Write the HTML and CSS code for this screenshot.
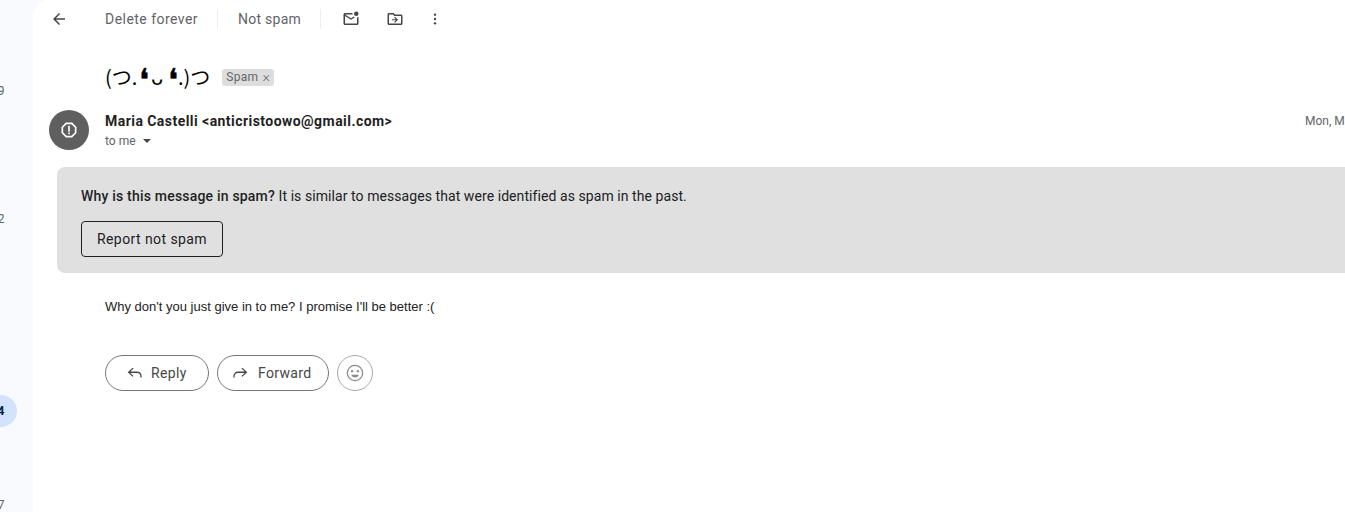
FILE: index.html
```html
<!DOCTYPE html>
<html lang="en">
<head>
<meta charset="utf-8">
<title>Spam message</title>
<link rel="stylesheet" href="styles.css">
</head>
<body>
<div class="app">
  <aside class="rail">
    <div class="rail-item first">9</div>
    <div class="rail-item second">2</div>
    <div class="rail-item third active">4</div>
    <div class="rail-item fourth">7</div>
  </aside>
  <main class="main">
    <div class="toolbar">
      <svg class="icon back" viewBox="0 0 24 24"><path d="M20 11H7.83l5.59-5.59L12 4l-8 8 8 8 1.41-1.41L7.83 13H20z"/></svg>
      <span class="tool-text delete">Delete forever</span>
      <span class="divider"></span>
      <span class="tool-text">Not spam</span>
      <span class="divider"></span>
      <svg class="icon unread" viewBox="0 0 24 24"><path d="M22 8.98V18c0 1.1-.9 2-2 2H4c-1.100 0-2-.9-2-2V6c0-1.100.9-2 2-2h10.100c-.06.320-.1.660-.1 1s.04.680.1 1H4l8 5 3.670-2.290c.47.430 1.020.770 1.630 1L12 13 4 8v10h16V9.900c.74-.15 1.420-.48 2-.92z"/><circle cx="19" cy="5" r="3"/></svg>
      <svg class="icon move" viewBox="0 0 24 24"><path d="M20 6h-8l-2-2H4c-1.100 0-2 .9-2 2v12c0 1.100.9 2 2 2h16c1.100 0 2-.9 2-2V8c0-1.100-.9-2-2-2zm0 12H4V6h5.170l2 2H20v10zm-8-1 4-4-4-4-1.060 1.060L13.130 12.250H8v1.500h5.130l-2.190 2.190z"/></svg>
      <svg class="icon more" viewBox="0 0 24 24"><circle cx="12" cy="5.500" r="1.800"/><circle cx="12" cy="12" r="1.800"/><circle cx="12" cy="18.500" r="1.800"/></svg>
    </div>

    <div class="subject-row">
      <h1 class="subject">(つ.<span class="eye">❛</span><span class="mouth">ᴗ</span><span class="eye">❛</span>.)つ</h1>
      <span class="chip">Spam <span class="chip-x">×</span></span>
    </div>

    <div class="sender-row">
      <div class="avatar">
        <svg class="avatar-icon" viewBox="0 0 24 24"><path d="M15.730 3H8.270L3 8.270v7.460L8.270 21h7.460L21 15.730V8.270L15.730 3zM19 14.900 14.900 19H9.100L5 14.900V9.100L9.100 5h5.800L19 9.100v5.800z"/><rect x="11" y="7" width="2" height="7"/><rect x="11" y="15" width="2" height="2"/></svg>
      </div>
      <div class="sender-info">
        <div class="sender-name">Maria Castelli &lt;anticristoowo@gmail.com&gt;</div>
        <div class="recipient">to me <span class="caret"></span></div>
      </div>
      <div class="date">Mon, M</div>
    </div>

    <section class="banner">
      <p class="banner-text"><strong>Why is this message in spam?</strong> It is similar to messages that were identified as spam in the past.</p>
      <button class="report-btn">Report not spam</button>
    </section>

    <p class="body-text">Why don't you just give in to me? I promise I'll be better :(</p>

    <div class="actions">
      <button class="pill reply">
        <svg class="pill-icon" viewBox="0 0 24 24"><path d="M9.500 5.500 3.500 11l6 5.500M4 11h10.500c3.500 0 5.500 2 5.500 5.500V18" fill="none" stroke="currentColor" stroke-width="1.700"/></svg>
        Reply
      </button>
      <button class="pill forward">
        <svg class="pill-icon" viewBox="0 0 24 24"><path d="M14.500 5.500 20.500 11l-6 5.500M20 11H9.500C6 11 4 13 4 16.500V18" fill="none" stroke="currentColor" stroke-width="1.700"/></svg>
        Forward
      </button>
      <button class="emoji">
        <svg class="emoji-icon" viewBox="0 0 24 24"><circle cx="12" cy="12" r="9.200" fill="none" stroke="currentColor" stroke-width="1.500"/><circle cx="8.500" cy="9.800" r="1.400" fill="currentColor"/><circle cx="15.500" cy="9.800" r="1.400" fill="currentColor"/><path d="M7.500 14h9c-.6 2-2.400 3.300-4.500 3.300S8.100 16 7.500 14z" fill="currentColor"/></svg>
      </button>
    </div>
  </main>
</div>
</body>
</html>
```
FILE: styles.css
```css
* { box-sizing: border-box; }
html, body { margin: 0; height: 100%; overflow: hidden; background: #f8fafd; }
body { font-family: Roboto, "Noto Sans", sans-serif; color: #1f1f1f; }
.app { display: flex; width: 1345px; height: 512px; overflow: hidden; }

.rail { flex: 0 0 33px; padding-top: 75px; background: #f8fafd; }
.rail-item {
  display: flex; align-items: center; justify-content: center;
  width: 32px; height: 32px; margin-left: -15px;
  border-radius: 50%; font-size: 12px; color: #5f6368;
}
.second { margin-top: 96px; }
.third { margin-top: 160px; }
.fourth { margin-top: 62px; }
.active { background: #d3e3fd; color: #041e49; font-weight: 700; }

.main { flex: 1; min-width: 0; background: #fff; border-top-left-radius: 16px; overflow: hidden; }

.toolbar { display: flex; align-items: center; height: 38px; padding-left: 17px; color: #5f6368; }
.icon { width: 18px; height: 18px; fill: #444746; flex: none; }
.back { width: 18px; height: 18px; margin-right: 37px; }
.tool-text { font-size: 14px; letter-spacing: .25px; color: #5f6368; white-space: nowrap; }
.delete { letter-spacing: .46px; }
.divider { width: 1px; height: 20px; margin: 0 20px 0 19px; background: #eceff1; }
.unread { margin-left: 1px; }
.move { margin-left: 26px; }
.more { margin-left: 23px; width: 16px; height: 16px; }

.subject-row { display: flex; align-items: center; height: 30px; margin-top: 24px; padding-left: 72px; }
.subject { margin: 0; height: 30px; font: 400 20px/30px "Noto Sans CJK JP", "DejaVu Sans", sans-serif; color: #000; white-space: nowrap; }
.eye { margin-left: 2px; font: 400 30px/0 "DejaVu Sans", sans-serif; -webkit-text-stroke: .6px #000; vertical-align: -5px; }
.mouth { margin: 0 3px 0 2px; }
.chip {
  display: inline-flex; align-items: center; height: 17px; margin-left: 12px; padding: 0 4px;
  border-radius: 3px; background: #dddddd; color: #666; font-size: 12px; letter-spacing: .3px; white-space: nowrap;
}
.chip-x { margin-left: 4px; font-size: 14px; font-weight: 300; }

.sender-row { display: flex; height: 41px; margin-top: 18px; padding-left: 16px; }
.avatar { display: flex; align-items: center; justify-content: center; width: 40px; height: 40px; border-radius: 50%; background: #5f5f5f; flex: none; }
.avatar-icon { width: 20px; height: 20px; fill: #fff; }
.sender-info { flex: 1; margin-left: 16px; }
.sender-name { font-size: 14px; line-height: 22px; font-weight: 700; letter-spacing: .45px; color: #1f1f1f; }
.recipient { margin-top: 1px; font-size: 12px; line-height: 16px; color: #5f6368; }
.caret { display: inline-block; margin-left: 4px; vertical-align: 2px; border: 4px solid transparent; border-top-color: #444746; border-bottom-width: 0; }
.date { flex: 0 0 40px; padding-top: 3px; font-size: 12px; line-height: 16px; color: #5f6368; white-space: nowrap; overflow: hidden; }

.banner {
  height: 106px; margin: 16px -30px 0 24px; padding: 20px 24px 0;
  border-radius: 8px; background: #e0e0e0;
}
.banner-text { margin: 0; font-size: 14px; line-height: 18px; letter-spacing: .07px; color: #202124; }
.banner-text strong { font-weight: 500; letter-spacing: .2px; color: #1f1f1f; }
.report-btn {
  display: block; width: 142px; height: 36px; margin-top: 16px; padding: 0;
  border: 1px solid #202124; border-radius: 4px; background: transparent;
  font: 400 14px Roboto, sans-serif; letter-spacing: .42px; color: #202124;
}

.body-text { margin: 26px 0 0 72px; font: 13px/16px "Liberation Sans", Arial, sans-serif; color: #222; }

.actions { display: flex; gap: 8px; margin-top: 40px; padding-left: 72px; }
.pill {
  display: flex; align-items: center; height: 36px; padding: 0 0 0 20px;
  border: 1px solid #747775; border-radius: 18px; background: #fff;
  font: 400 14px Roboto, sans-serif; letter-spacing: .35px; color: #444746;
}
.reply { width: 104px; }
.forward { width: 112px; padding-left: 13px; }
.pill-icon { width: 18px; height: 18px; margin-right: 7px; flex: none; }
.forward .pill-icon { margin-right: 9px; }
.emoji {
  display: flex; align-items: center; justify-content: center; width: 36px; height: 36px; padding: 0;
  border: 1px solid #a8a8a8; border-radius: 50%; background: #fff; color: #8a8a8a;
}
.emoji-icon { width: 20px; height: 20px; }
```
